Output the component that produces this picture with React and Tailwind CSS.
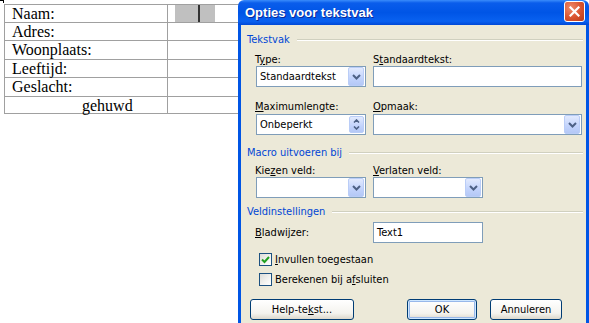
import React from 'react';

const U = ({ children }) => <span className="underline decoration-1 underline-offset-[1px]">{children}</span>;

function DropButton() {
  return (
    <div className="mr-[1px] flex h-[19px] w-[16px] items-center justify-center rounded-[2px] border border-[#BACDF7] bg-[linear-gradient(to_bottom,#E2EAFE,#C2D3FC_60%,#B4C8F6)]">
      <svg width="9" height="6" viewBox="0 0 9 6">
        <path d="M1 1 L4.5 4.5 L8 1" fill="none" stroke="#4D6185" strokeWidth="2" />
      </svg>
    </div>
  );
}

function Spin() {
  return (
    <div className="mr-[1px] flex h-[17px] w-[15px] flex-col rounded-[2px] border border-[#BACDF7] bg-[linear-gradient(to_bottom,#E2EAFE,#C2D3FC_60%,#B4C8F6)]">
      <div className="flex flex-1 items-center justify-center">
        <svg width="7" height="4" viewBox="0 0 7 4">
          <path d="M1 3.5 L3.5 1 L6 3.5" fill="none" stroke="#4D6185" strokeWidth="1.6" />
        </svg>
      </div>
      <div className="flex flex-1 items-center justify-center">
        <svg width="7" height="4" viewBox="0 0 7 4">
          <path d="M1 0.5 L3.5 3 L6 0.5" fill="none" stroke="#4D6185" strokeWidth="1.6" />
        </svg>
      </div>
    </div>
  );
}

function Select({ width, value, spin }) {
  return (
    <div className={`flex h-[21px] items-center border border-[#7F9DB9] bg-white ${width}`}>
      <span className="flex-1 pl-[3px] text-black">{value}</span>
      {spin ? <Spin /> : <DropButton />}
    </div>
  );
}

function TextBox({ width, value }) {
  return (
    <div className={`flex h-[21px] items-center border border-[#7F9DB9] bg-white pl-[3px] text-black ${width}`}>
      {value}
    </div>
  );
}

function GroupHeader({ children, className }) {
  return (
    <div className={`flex h-[13px] items-center pl-[6px] pr-[3px] ${className}`}>
      <span className="text-[#0046D5]">{children}</span>
      <div className="ml-[7px] h-[2px] flex-1 border-t border-b border-t-[#D0D0BF] border-b-white" />
    </div>
  );
}

function Checkbox({ checked, children, className }) {
  return (
    <div className={`flex h-[13px] items-center pl-[18px] ${className}`}>
      <div className="flex h-[13px] w-[13px] items-center justify-center border border-[#1C5180] bg-[linear-gradient(135deg,#DCDCD7,#F4F4F1_60%,#FFFFFF)]">
        {checked && (
          <svg width="9" height="8" viewBox="0 0 9 8">
            <path d="M1 3.5 L3.5 6 L8 1" fill="none" stroke="#21A121" strokeWidth="2" />
          </svg>
        )}
      </div>
      <span className="ml-[3px]">{children}</span>
    </div>
  );
}

function XPButton({ children, className, isDefault }) {
  return (
    <div
      className={`flex h-[21px] items-center justify-center rounded-[3px] border border-[#003C74] bg-[linear-gradient(to_bottom,#FFFFFF,#F4F3EE_70%,#DCD8CC)] ${
        isDefault ? 'shadow-[inset_0_0_0_1px_#CEE7FF,inset_0_0_0_2px_#98B8EA]' : ''
      } ${className}`}
    >
      {children}
    </div>
  );
}

const rows = [
  { label: 'Naam:', h: 'h-[18px]', field: true },
  { label: 'Adres:', h: 'h-[18px]' },
  { label: 'Woonplaats:', h: 'h-[19px]' },
  { label: 'Leeftijd:', h: 'h-[18px]' },
  { label: 'Geslacht:', h: 'h-[19px]' },
  { label: 'gehuwd', h: 'h-[17px]', center: true },
];

export default function App() {
  return (
    <div className="relative h-[323px] w-[589px] overflow-hidden bg-white">
      {/* Document with table */}
      <div className="absolute left-0 top-0 h-[3px] w-[4px] border-r border-t border-black" />
      <div className="ml-[4px] mt-[4px] w-[320px] border-t border-l border-[#A0A0A0] font-['Liberation_Serif',serif] text-[16px] leading-[17px] text-black">
        {rows.map((r) => (
          <div key={r.label} className={`flex border-b border-[#A0A0A0] ${r.h}`}>
            <div className={`w-[163px] shrink-0 border-r border-[#A0A0A0] ${r.center ? 'pl-[77px]' : 'pl-[7px]'}`}>
              {r.label}
            </div>
            <div className="flex-1 pl-[7px]">
              {r.field && (
                <div className="flex h-[17px] w-[40px] bg-[#C0C0C0] pl-[23px]">
                  <div className="h-[17px] w-[2px] bg-[#333333]" />
                </div>
              )}
            </div>
          </div>
        ))}
      </div>

      {/* Dialog window */}
      <div className="absolute left-[238px] top-0 flex h-[340px] w-[351px] flex-col font-['DejaVu_Sans_Condensed','Liberation_Sans',sans-serif] text-[11px] leading-[13px] text-black">
        <div className="flex h-[25px] shrink-0 items-center justify-between rounded-t-[6px] bg-[linear-gradient(to_bottom,#3A8CFB_0%,#0A5DEB_12%,#0055E6_50%,#0961F0_85%,#0048D6_100%)] pl-[7px] pr-[4px]">
          <span className="font-['Liberation_Sans',sans-serif] text-[13px] font-bold text-white [text-shadow:1px_1px_0_#0A2A9A]">Opties voor tekstvak</span>
          <div className="mb-[3px] flex h-[21px] w-[21px] items-center justify-center rounded-[3px] border border-white bg-[radial-gradient(circle_at_30%_30%,#F08A6A,#D9532F_55%,#B83A18)]">
            <svg width="11" height="11" viewBox="0 0 11 11">
              <path d="M1.5 1.5 L9.5 9.5 M9.5 1.5 L1.5 9.5" stroke="white" strokeWidth="2.2" strokeLinecap="square" />
            </svg>
          </div>
        </div>

        <div className="flex-1 border-l-[3px] border-r-[3px] border-[#0055E5] bg-[#ECE9D8]">
          <GroupHeader className="mt-[8px]">Tekstvak</GroupHeader>

          <div className="mt-[7px] flex pl-[14px]">
            <div className="w-[117px]">
              <div className="h-[13px]">
                T<U>y</U>pe:
              </div>
              <div className="ml-[1px]">
                <Select width="w-[110px]" value="Standaardtekst" />
              </div>
            </div>
            <div>
              <div className="h-[13px] pl-[1px]">
                S<U>t</U>andaardtekst:
              </div>
              <div className="ml-[1px]">
                <TextBox width="w-[209px]" value="" />
              </div>
            </div>
          </div>

          <div className="mt-[13px] flex pl-[14px]">
            <div className="w-[117px]">
              <div className="h-[14px]">
                <U>M</U>aximumlengte:
              </div>
              <div className="ml-[1px]">
                <Select width="w-[110px]" value="Onbeperkt" spin />
              </div>
            </div>
            <div>
              <div className="h-[14px] pl-[1px]">
                <U>O</U>pmaak:
              </div>
              <div className="ml-[1px]">
                <Select width="w-[209px]" value="" />
              </div>
            </div>
          </div>

          <GroupHeader className="mt-[11px]">Macro uitvoeren bij</GroupHeader>

          <div className="mt-[5px] flex pl-[14px]">
            <div className="w-[117px]">
              <div className="h-[13px]">
                Kie<U>z</U>en veld:
              </div>
              <div className="ml-[1px]">
                <Select width="w-[110px]" value="" />
              </div>
            </div>
            <div>
              <div className="h-[13px] pl-[1px]">
                <U>V</U>erlaten veld:
              </div>
              <div className="ml-[1px]">
                <Select width="w-[110px]" value="" />
              </div>
            </div>
          </div>

          <GroupHeader className="mt-[7px]">Veldinstellingen</GroupHeader>

          <div className="mt-[4px] flex items-center pl-[14px]">
            <div className="w-[118px]">
              <U>B</U>ladwijzer:
            </div>
            <TextBox width="w-[110px]" value="Text1" />
          </div>

          <Checkbox checked className="mt-[10px]">
            <U>I</U>nvullen toegestaan
          </Checkbox>
          <Checkbox className="mt-[7px]">
            Berekenen bij a<U>f</U>sluiten
          </Checkbox>

          <div className="mt-[13px] flex pl-[9px]">
            <XPButton className="w-[104px]">
              Help-te<U>k</U>st...
            </XPButton>
            <XPButton isDefault className="ml-[53px] w-[70px]">
              OK
            </XPButton>
            <XPButton className="ml-[13px] w-[72px]">Annuleren</XPButton>
          </div>
        </div>
      </div>
    </div>
  );
}
